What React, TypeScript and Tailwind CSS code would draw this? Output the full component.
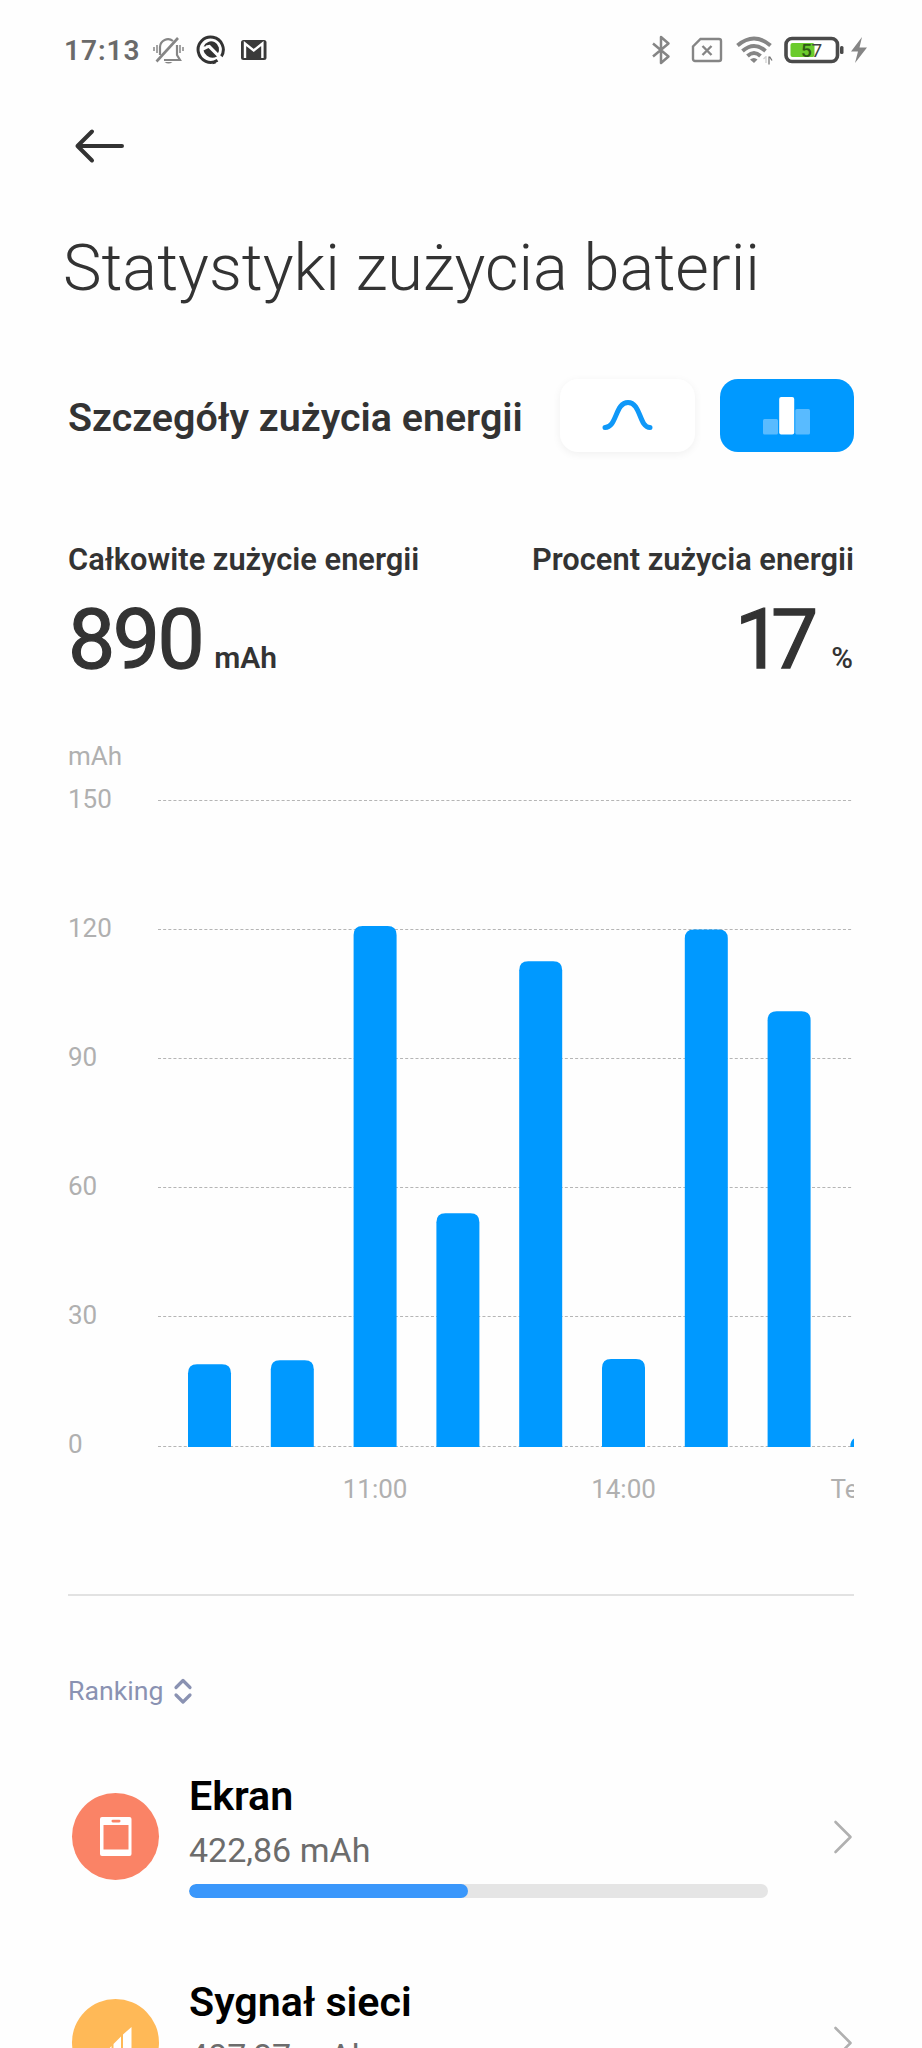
import type { ReactNode } from 'react';

const BARS = [
  { value: 19, label: '' },
  { value: 19.9, label: '' },
  { value: 120.8, label: '11:00' },
  { value: 54.1, label: '' },
  { value: 112.6, label: '' },
  { value: 20.2, label: '14:00' },
  { value: 120, label: '' },
  { value: 101, label: '' },
  { value: 2, label: '' },
];

const TICKS = [150, 120, 90, 60, 30, 0];

const CHART_BOTTOM = 706;
const UNIT = 4.304;

function StatusBar() {
  return (
    <div className="flex h-[100px] items-center pl-[64px] pr-[54px]">
      <span className="w-[88px] pt-[2px] text-[28px] leading-[36px] font-semibold tracking-[1px] text-[#6a6a6a]">17:13</span>
      <svg className="h-[32px] w-[32px]" viewBox="0 0 32 32" fill="none" stroke="#858585" strokeWidth="2.200">
        <path d="M8 21V13a8 8 0 0 1 13-6M25 11v10l3 5H12" />
        <path d="M4.500 27.500L26 4" strokeWidth="2.600" />
        <path d="M5 11v8M2 13v4M28 11v8M31 13v4" strokeWidth="1.500" />
        <path d="M12.500 28h8q-4 3.200-8 0z" fill="#858585" stroke="none" />
      </svg>
      <svg className="ml-[12px] h-[30px] w-[30px]" viewBox="0 0 30 30" fill="none">
        <path d="M21.500 25.300A12.600 12.600 0 1 1 25.300 21.500" stroke="#333" strokeWidth="3" />
        <path d="M16.500 27.700A12.800 12.800 0 0 0 19.500 26.900" stroke="#333" strokeWidth="3" />
        <path d="M7.600 11.500a8 8 0 1 1 14 7.500L14 10.800z" fill="#333" />
        <path d="M7.500 15.500l5-2.500 8.500 8.500q-5.500 3-10-.7-2.800-2-3.500-5.300z" fill="#333" />
        <path d="M10 11.500l3.500-.8 12 12.300" stroke="#fefefe" strokeWidth="1.800" />
      </svg>
      <svg className="ml-[14px] h-[22px] w-[28px]" viewBox="0 0 28 22">
        <rect x="1" y="1" width="25.500" height="20" rx="2.500" fill="#3a3a3a" />
        <path d="M5 19V4.500L13.700 11.500L22.400 4.500V19" fill="none" stroke="#fff" strokeWidth="2.400" />
      </svg>
      <div className="ml-auto flex items-center">
        <svg className="h-[30px] w-[20px]" viewBox="0 0 20 30" fill="none" stroke="#858585" strokeWidth="2.500" strokeLinejoin="round">
          <path d="M2 8.500L17.500 21.500L10 28V2L17.500 8.500L2 21.500" />
        </svg>
        <svg className="ml-[20px] h-[26px] w-[32px]" viewBox="0 0 32 26" fill="none" stroke="#858585" strokeWidth="2.400">
          <path d="M9.500 2H28a2 2 0 0 1 2 2v18a2 2 0 0 1-2 2H4a2 2 0 0 1-2-2V9.500z" />
          <path d="M11.500 9l9 9M20.500 9l-9 9" />
        </svg>
        <svg className="ml-[12px] h-[30px] w-[38px]" viewBox="0 0 38 30" fill="none" stroke="#858585" strokeWidth="4">
          <path d="M2.500 10.500Q19-3.500 35.500 10.500" />
          <path d="M7.500 16Q19 6 30.500 16" />
          <path d="M12.500 21Q19 15 25.500 21" />
          <path d="M15 24.500q4-3 7.500 0L19 28z" fill="#858585" stroke="none" />
          <path d="M31 21v7M30.500 22l-2 2" stroke="#d0d0d0" strokeWidth="1.300" />
          <path d="M34 21.500v8M34.500 21.500l2.500 4" stroke="#777" strokeWidth="1.300" />
        </svg>
        <svg className="ml-[11px] h-[28px] w-[60px]" viewBox="0 0 60 28">
          <rect x="2" y="2.500" width="51.500" height="23" rx="6" fill="#fff" stroke="#4a4a4a" strokeWidth="3.600" />
          <rect x="6.500" y="7" width="24" height="14" rx="2" fill="#6bcb2c" />
          <rect x="56" y="10" width="3.500" height="8" rx="1.500" fill="#4a4a4a" />
          <text x="17" y="21" fontSize="19" fontWeight="500" fill="#2f5a14">5</text>
          <text x="27.500" y="21" fontSize="19" fontWeight="400" fill="#444">7</text>
        </svg>
        <svg className="ml-[6px] h-[26px] w-[18px]" viewBox="0 0 18 26">
          <path d="M12 0L1 14.500H8L5 26L17 10.500H9.500z" fill="#858585" />
        </svg>
      </div>
    </div>
  );
}

function Stat({ title, value, unit, right }: { title: string; value: string; unit: string; right?: boolean }) {
  return (
    <div className={right ? 'flex flex-col items-end' : 'flex flex-col'}>
      <p className="text-[30.800px] leading-[40px] font-semibold">{title}</p>
      <div className={right ? 'mt-[10px] flex items-baseline gap-[24px] pr-px' : 'mt-[10px] flex items-baseline gap-[12px]'}>
        <span
          className={
            right
              ? 'text-[84px] leading-[100px] tracking-[-11px] [-webkit-text-stroke:1.3px_#333]'
              : 'text-[84px] leading-[100px] tracking-[-2.500px] [-webkit-text-stroke:1.3px_#333]'
          }
        >
          {value}
        </span>
        <span className={right ? 'text-[29.500px] font-medium' : 'text-[30px] font-semibold'}>{unit}</span>
      </div>
    </div>
  );
}

function EnergyChart() {
  return (
    <svg className="h-[780px] w-[786px]" viewBox="0 0 786 780" fontSize="26" fontWeight="400" fill="#b0b0b0">
      <text x="0" y="24.500">mAh</text>
      {TICKS.map((tick) => {
        const y = Math.floor(CHART_BOTTOM - tick * UNIT) + 0.5;
        return (
          <g key={tick}>
            <text x="0" y={712.5 - tick * 4.297}>{tick}</text>
            <line x1="90" x2="784" y1={y} y2={y} stroke="#b5b5b5" strokeWidth="1" strokeDasharray="3 2.150" />
          </g>
        );
      })}
      {BARS.map((bar, index) => {
        const x = 120 + index * 82.8;
        const top = CHART_BOTTOM - bar.value * UNIT;
        const r = 9;
        return (
          <g key={index}>
            <path
              d={`M${x} ${CHART_BOTTOM + 1}V${top + r}q0 ${-r} ${r} ${-r}h25q${r} 0 ${r} ${r}V${CHART_BOTTOM + 1}z`}
              fill="#0099ff"
            />
            {bar.label && <text x={x + 21.5} y="758" textAnchor="middle">{bar.label}</text>}
          </g>
        );
      })}
      <text x="762.500" y="758">Teraz</text>
    </svg>
  );
}

function RankRow({ name, usage, percent, color, icon }: { name: string; usage: string; percent: number; color: string; icon: ReactNode }) {
  return (
    <div className="flex h-[206px] items-start pl-[4px]">
      <div className="mt-[22px] h-[87px] w-[87px] shrink-0 rounded-full" style={{ backgroundColor: color }}>
        {icon}
      </div>
      <div className="ml-[30px] w-[579px] shrink-0">
        <p className="text-[41.200px] leading-[50px] font-semibold text-black">{name}</p>
        <p className="mt-[7px] text-[34px] leading-[44px] text-[#6c6c6c]">{usage}</p>
        <div className="mt-[12px] h-[14px] overflow-hidden rounded-full bg-[#e5e5e5]">
          <div className="h-full rounded-full bg-[#3a97fb]" style={{ width: `${percent}%` }} />
        </div>
      </div>
      <svg className="mt-[48px] ml-[64px] h-[36px] w-[22px]" viewBox="0 0 22 36" fill="none" stroke="#b0b0b0" strokeWidth="2.600" strokeLinecap="round" strokeLinejoin="round">
        <path d="M3.500 3L18.500 18L3.500 33" />
      </svg>
    </div>
  );
}

export default function App() {
  return (
    <div className="h-[2048px] w-[922px] overflow-hidden bg-[#fefefe] font-['Roboto',sans-serif] text-[#333]">
      <StatusBar />
      <div className="flex h-[92px] items-center pl-[72px]">
        <svg className="h-[40px] w-[54px]" viewBox="0 0 54 40" fill="none" stroke="#333" strokeWidth="4" strokeLinecap="round" strokeLinejoin="round">
          <path d="M50 20H5.500M20 5.500L5.500 20L20 34.500" />
        </svg>
      </div>
      <h1 className="mt-[36px] pl-[63px] text-[64.900px] leading-[80px] font-light whitespace-nowrap">
        Statystyki zużycia baterii
      </h1>

      <main className="pr-[68px] pl-[68px]">
        <div className="mt-[71px] flex h-[73px] items-center">
          <h2 className="w-[492px] pt-[4px] text-[39.400px] font-semibold whitespace-nowrap">Szczegóły zużycia energii</h2>
          <button className="flex h-[73px] w-[135px] items-center justify-center rounded-[18px] bg-white shadow-[0_2px_8px_rgba(0,0,0,0.06)]">
            <svg className="mb-[2px] h-[32px] w-[54px]" viewBox="0 0 54 32" fill="none" stroke="#0f98f8" strokeWidth="5" strokeLinecap="round">
              <path d="M4 28.500C16 28.500 14 3.500 27 3.500S38 28.500 49 28.500" />
            </svg>
          </button>
          <button className="ml-[25px] flex h-[73px] w-[134px] items-center justify-center rounded-[18px] bg-[#0099ff]">
            <svg className="mt-px mr-[2px] h-[38px] w-[47px]" viewBox="0 0 47 38">
              <rect x="0" y="22" width="15" height="15.500" rx="1.500" fill="#59bbff" />
              <rect x="16.200" y="0" width="15" height="37.500" rx="2" fill="#fff" />
              <rect x="32.300" y="12" width="14.700" height="25.500" rx="1.500" fill="#59bbff" />
            </svg>
          </button>
        </div>

        <div className="mt-[88px] flex h-[200px] justify-between">
          <Stat title="Całkowite zużycie energii" value="890" unit="mAh" />
          <Stat title="Procent zużycia energii" value="17" unit="%" right />
        </div>

        <EnergyChart />

        <div className="mt-[74px] h-[2px] bg-[#e2e2e2]" />

        <div className="mt-[75px] flex h-[40px] items-center text-[#8a92b2]">
          <span className="text-[26.700px] leading-[40px]">Ranking</span>
          <svg className="ml-[9px] h-[28px] w-[22px]" viewBox="0 0 22 28" fill="none" stroke="currentColor" strokeWidth="3.200" strokeLinecap="round" strokeLinejoin="round">
            <path d="M4 10.500L11 3.500L18 10.500M4 18L11 25L18 18" />
          </svg>
        </div>

        <div className="mt-[60px]">
          <RankRow
            name="Ekran"
            usage="422,86 mAh"
            percent={48.2}
            color="#fa8366"
            icon={
              <svg viewBox="0 0 87 87">
                <rect x="28" y="24" width="31.500" height="39" rx="2" fill="#fff" />
                <rect x="31.500" y="32" width="25" height="24.500" fill="#fa8366" />
                <rect x="39.500" y="26.800" width="9" height="2.600" rx="1.300" fill="#fa8366" />
              </svg>
            }
          />
          <RankRow
            name="Sygnał sieci"
            usage="407,87 mAh"
            percent={46.5}
            color="#ffb957"
            icon={
              <svg viewBox="0 0 87 87" fill="#fff">
                <path d="M51 35.500L59.500 28V60H51z" />
                <path d="M41.500 45L49 37.500V60H41.500z" />
                <path d="M28 60L39.500 47V60z" />
              </svg>
            }
          />
        </div>
      </main>
    </div>
  );
}
